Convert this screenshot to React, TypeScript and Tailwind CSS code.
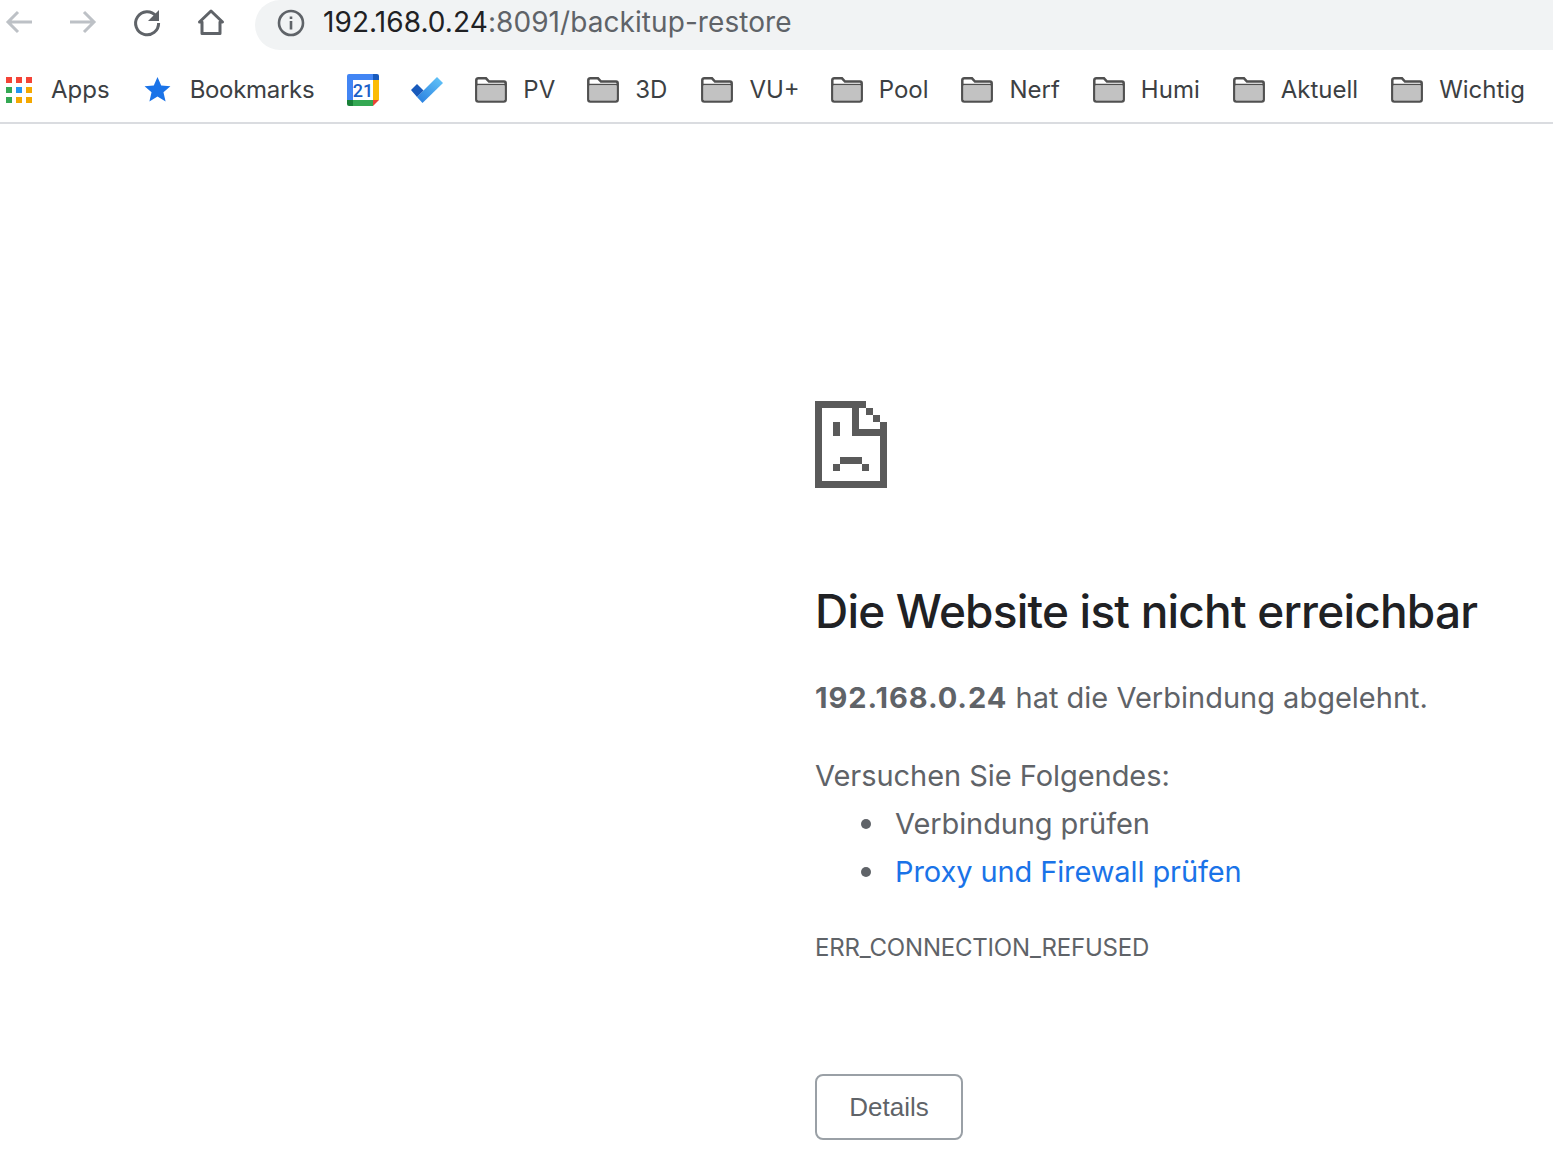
const R = "font-['Inter',sans-serif]";

function Pixel() {
  const rects = [
    [0, 0, 51, 7], [0, 0, 7, 87], [0, 80, 72, 7], [65, 21, 7, 66], [37, 0, 7, 35], [37, 28, 35, 7],
    [51, 7, 7, 7], [58, 14, 7, 7], [18, 21, 7, 14], [25, 56, 22, 7], [18, 63, 7, 7], [47, 63, 7, 7],
  ];
  return (
    <svg width="72" height="87" viewBox="0 0 72 87" fill="#5a5a5a" shapeRendering="crispEdges">
      {rects.map((r, i) => <rect key={i} x={r[0]} y={r[1]} width={r[2]} height={r[3]} />)}
    </svg>
  );
}

function Folder() {
  return (
    <svg width="32" height="26" viewBox="0 0 32 26" className="shrink-0">
      <path d="M1.300 22.500V3A2 2 0 0 1 3.300 1.300h7.700l3 3.200H29a1.800 1.800 0 0 1 1.700 1.800v16.200a2 2 0 0 1-2 2H3.300a2 2 0 0 1-2-2z" fill="#fff" stroke="#505050" strokeWidth="2.500" />
      <path d="M2.500 8.500h27v14a1 1 0 0 1-1 1h-25a1 1 0 0 1-1-1z" fill="#c2c2c2" />
      <path d="M1.500 7.500h29" stroke="#505050" strokeWidth="1.500" />
    </svg>
  );
}

function Apps() {
  const c = ["#f44336", "#f44336", "#f44336", "#34a853", "#2196f3", "#f4a800", "#34a853", "#f4a800", "#f4a800"];
  return (
    <div className="grid grid-cols-3 gap-x-[4px] gap-y-[4px] w-[26px] shrink-0">
      {c.map((x, i) => <div key={i} className="w-[6px] h-[6px]" style={{ background: x }} />)}
    </div>
  );
}

function Item({ label, ml }: { label: string; ml: string }) {
  return (
    <div className={`flex items-center gap-[16px] ${ml}`}>
      <Folder />
      <span>{label}</span>
    </div>
  );
}

export default function App() {
  return (
    <div className={`${R} w-[1553px] h-[1174px] overflow-hidden bg-white`}>
      <div className="h-[50px] flex items-center">
        <svg width="32" height="32" viewBox="0 0 32 32" className="ml-[3px] mb-[6px]" fill="none" stroke="#bdc1c6" strokeWidth="3">
          <path d="M29 16H5M15 6 5 16l10 10" />
        </svg>
        <svg width="32" height="32" viewBox="0 0 32 32" className="ml-[32px] mb-[6px]" fill="none" stroke="#bdc1c6" strokeWidth="3">
          <path d="M3 16h24M17 6l10 10-10 10" />
        </svg>
        <svg width="32" height="32" viewBox="0 0 32 32" className="ml-[32px] mb-[6px]" fill="none">
          <path d="M25 10a11.500 11.500 0 1 0 2.600 7" stroke="#5f6368" strokeWidth="3" />
          <path d="M28 4v11H17z" fill="#5f6368" />
        </svg>
        <svg width="32" height="32" viewBox="0 0 32 32" className="ml-[32px] mb-[6px]" fill="none" stroke="#5f6368" strokeWidth="3">
          <path d="M4.500 16 16 5l11.500 11H25v11.500H7V16z" strokeLinejoin="round" />
        </svg>
        <div className="ml-[28px] flex-1 h-[50px] bg-[#f1f3f4] rounded-l-[25px] flex items-center">
          <svg width="28" height="28" viewBox="0 0 28 28" className="ml-[22px] mb-[5px]" fill="none">
            <circle cx="14" cy="14" r="12" stroke="#5f6368" strokeWidth="2.600" />
            <path d="M12.700 12h2.600v8.500h-2.600zM12.700 7.500h2.600V10h-2.600z" fill="#5f6368" />
          </svg>
          <div className="ml-[18px] mb-[6px] text-[28px] tracking-[0.07px] leading-none text-[#5f6368]">
            <span className="text-[#202124]">192.168.0.24</span>:8091/backitup-restore
          </div>
        </div>
      </div>

      <div className="h-[74px] border-b-2 border-[#dadce0] flex items-center pl-[6px] text-[24px] text-[#3c4043] pt-[7px]">
        <Apps />
        <span className="ml-[19px]">Apps</span>
        <svg width="27" height="27" viewBox="0 0 24 24" className="ml-[34px]" fill="#1a73e8">
          <path d="m12 .8 3.300 7.600 8.200.7-6.200 5.400 1.900 8.100L12 18.300l-7.200 4.300 1.900-8.100L.5 9.100l8.200-.7z" />
        </svg>
        <span className="ml-[19px] tracking-[-0.3px]">Bookmarks</span>
        <svg width="32" height="32" viewBox="0 0 32 32" className="ml-[33px]">
          <path d="M2 0h24v6H6v20H0V2a2 2 0 0 1 2-2z" fill="#4285f4" />
          <path d="M26 0h4a2 2 0 0 1 2 2v4h-6z" fill="#185abc" />
          <path d="M26 6h6v20h-6z" fill="#fbbc04" />
          <path d="M6 26h20v6H6z" fill="#34a853" />
          <path d="M0 26h6v6H2a2 2 0 0 1-2-2z" fill="#188038" />
          <path d="M26 26h6l-6 6z" fill="#ea4335" />
          <text x="16" y="23" textAnchor="middle" fontSize="18" fontWeight="500" fontFamily="Roboto, sans-serif" fill="#1a5fc8">21</text>
        </svg>
        <svg width="32" height="26" viewBox="0 0 32 26" className="ml-[32px]">
          <defs>
            <linearGradient id="td" x1="0.1" y1="1" x2="0.9" y2="0">
              <stop offset="0" stopColor="#2a80e0" />
              <stop offset="1" stopColor="#62c4f8" />
            </linearGradient>
          </defs>
          <path d="M11.500 26 6 20 26 0l6 6z" fill="url(#td)" />
          <path d="M6 7l6.500 6.500L6 20 0 13z" fill="#185abc" />
        </svg>
        <Item label="PV" ml="ml-[32px]" />
        <Item label="3D" ml="ml-[32px]" />
        <Item label="VU+" ml="ml-[34px]" />
        <Item label="Pool" ml="ml-[31px]" />
        <Item label="Nerf" ml="ml-[33px]" />
        <Item label="Humi" ml="ml-[33px]" />
        <Item label="Aktuell" ml="ml-[33px]" />
        <Item label="Wichtig" ml="ml-[33px]" />
      </div>

      <main className="ml-[815px] pt-[277px] w-[738px]">
        <Pixel />
        <h1 className="mt-[87px] text-[46px] tracking-[-0.8px] leading-[72px] font-medium text-[#202124] whitespace-nowrap">Die Website ist nicht erreichbar</h1>
        <p className="mt-[27px] text-[29px] leading-[48px] text-[#5f6368] whitespace-nowrap"><strong className="font-bold tracking-[0.95px]">192.168.0.24</strong> hat die Verbindung abgelehnt.</p>
        <p className="mt-[30px] text-[29px] tracking-[-0.05px] leading-[48px] text-[#5f6368]">Versuchen Sie Folgendes:</p>
        <ul className="ml-[46px] text-[29px] tracking-[-0.1px] leading-[48px] text-[#5f6368]">
          <li className="flex items-center gap-[24px]"><span className="w-[10px] h-[10px] rounded-full bg-[#5f6368]" />Verbindung prüfen</li>
          <li className="flex items-center gap-[24px] text-[#1a73e8]"><span className="w-[10px] h-[10px] rounded-full bg-[#5f6368]" />Proxy und Firewall prüfen</li>
        </ul>
        <div className="mt-[34px] text-[24px] tracking-[-0.2px] leading-[36px] text-[#5f6368]">ERR_CONNECTION_REFUSED</div>
        <button className="mt-[108px] block w-[148px] h-[66px] border-2 border-[#9aa0a6] rounded-[8px] bg-white text-[26px] text-[#5f6368] font-['Liberation_Sans',sans-serif]">Details</button>
      </main>
    </div>
  );
}
